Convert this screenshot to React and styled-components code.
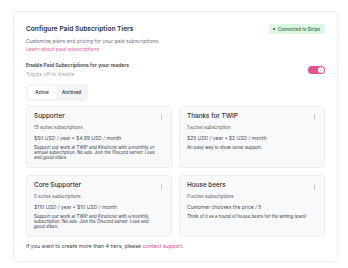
import React from 'react';
import styled, { createGlobalStyle } from 'styled-components';

const GlobalStyle = createGlobalStyle`
  body {
    margin: 0;
    background: #ffffff;
    font-family: Inter, "Liberation Sans", sans-serif;
  }
`;

const Panel = styled.section`
  margin: 11px 10px 0 13px;
  padding: 12px 12px 13px 12px;
  border: 1px solid #eceef1;
  border-radius: 4px;
  background: #fff;
  box-sizing: border-box;
  height: 251px;
`;

const Header = styled.div`
  display: flex;
  justify-content: space-between;
  align-items: center;
  height: 10px;
`;

const Title = styled.h2`
  margin: 0;
  font-size: 6.6px;
  font-weight: 600;
  color: #2b2f36;
`;

const Badge = styled.span`
  display: flex;
  align-items: center;
  gap: 3px;
  height: 10px;
  padding: 0 5px 0 4px;
  border-radius: 2px;
  background: #dcf7e3;
  color: #2f6b43;
  font-size: 4.4px;
  font-weight: 500;
`;

const Dot = styled.span`
  width: 2px;
  height: 2px;
  border-radius: 1px;
  background: #29493a;
`;

const Description = styled.p`
  margin: 3px 0 0;
  font-size: 5px;
  line-height: 8px;
  color: #6b7280;
`;

const Link = styled.a`
  color: ${({ $strong }) => ($strong ? '#e0468f' : '#e85a9c')};
  text-decoration: none;
  display: ${({ $block }) => ($block ? 'block' : 'inline')};
`;

const ToggleRow = styled.div`
  display: flex;
  justify-content: space-between;
  align-items: center;
  margin-top: 8px;
`;

const Label = styled.div`
  font-size: 5px;
  line-height: 8px;
  font-weight: 600;
  color: #3a3f47;
`;

const Hint = styled.div`
  margin-top: 1px;
  font-size: 5px;
  line-height: 8px;
  color: #a3a8b0;
`;

const Switch = styled.span`
  display: flex;
  align-items: center;
  justify-content: flex-end;
  width: 17px;
  height: 8px;
  padding: 0 1px;
  box-sizing: border-box;
  border-radius: 4px;
  background: #e4518f;
`;

const Knob = styled.span`
  display: flex;
  align-items: center;
  justify-content: center;
  width: 6px;
  height: 6px;
  border-radius: 50%;
  background: #fff;
`;

const Tabs = styled.div`
  display: inline-flex;
  margin-top: 6px;
  padding: 2px;
  border-radius: 3px;
  background: #f3f4f6;
  gap: 1px;
`;

const Tab = styled.button`
  border: 0;
  height: 13px;
  padding: 0 ${({ $active }) => ($active ? '6px' : '5px')};
  min-width: ${({ $active }) => ($active ? '28px' : '0')};
  border-radius: 2px;
  background: ${({ $active }) => ($active ? '#ffffff' : 'transparent')};
  font-family: inherit;
  font-size: 4.4px;
  font-weight: 600;
  color: #3a3f47;
`;

const Grid = styled.div`
  display: grid;
  grid-template-columns: 1fr 1fr;
  gap: 7px;
  margin-top: 5px;
`;

const Card = styled.div`
  position: relative;
  height: 62px;
  padding: 5px 6px 0 7px;
  border: 1px solid #eceef1;
  border-radius: 3px;
  background: #f8f9fb;
  box-sizing: border-box;
`;

const CardTitle = styled.h3`
  margin: 0;
  font-size: 6.4px;
  line-height: 9px;
  font-weight: 500;
  color: #2b2f36;
`;

const Menu = styled.span`
  position: absolute;
  top: 8px;
  right: 9px;
  display: flex;
  flex-direction: column;
  gap: 0.8px;
`;

const MenuDot = styled.span`
  width: 1px;
  height: 1px;
  border-radius: 50%;
  background: #9aa0a8;
`;

const Count = styled.div`
  margin-top: 4px;
  font-size: 4.5px;
  line-height: 6px;
  color: #4b5059;
`;

const Price = styled.div`
  margin-top: 4px;
  font-size: 5px;
  line-height: 7px;
  color: #4b5059;
`;

const Blurb = styled.p`
  margin: 2.5px 0 0;
  padding-right: 6px;
  font-size: 4.4px;
  line-height: 5px;
  color: #2f343b;
`;

const Footer = styled.p`
  margin: 5px 0 0;
  font-size: 5.3px;
  line-height: 8px;
  color: #3a3f47;
`;

const tiers = [
  {
    name: 'Supporter',
    count: '13 active subscriptions',
    price: '$50 USD / year \u2022 $4.99 USD / month',
    text: 'Support our work at TWIP and Kineticist with a monthly or annual subscription. No ads. Join the Discord server. Love and good vibes.',
  },
  {
    name: 'Thanks for TWIP',
    count: '1 active subscription',
    price: '$25 USD / year \u2022 $2 USD / month',
    text: 'An easy way to show some support.',
  },
  {
    name: 'Core Supporter',
    count: '0 active subscriptions',
    price: '$110 USD / year \u2022 $10 USD / month',
    text: 'Support our work at TWIP and Kineticist with a monthly subscription. No ads. Join the Discord server. Love and good vibes.',
  },
  {
    name: 'House beers',
    count: '0 active subscriptions',
    price: 'Customer chooses the price / 5',
    text: 'Think of it as a round of house beers for the writing team!',
  },
];

function App() {
  return (
    <>
      <GlobalStyle />
      <Panel>
        <Header>
          <Title>Configure Paid Subscription Tiers</Title>
          <Badge>
            <Dot />
            Connected to Stripe
          </Badge>
        </Header>
        <Description>
          Customize plans and pricing for your paid subscriptions.
          <Link $block href="#">Learn about paid subscriptions</Link>
        </Description>
        <ToggleRow>
          <div>
            <Label>Enable Paid Subscriptions for your readers</Label>
            <Hint>Toggle off to disable</Hint>
          </div>
          <Switch>
            <Knob>
              <svg width="4" height="4" viewBox="0 0 8 8">
                <path d="M2 4.2 L3.4 5.6 L6 2.6" fill="none" stroke="#e4518f" strokeWidth="1" />
              </svg>
            </Knob>
          </Switch>
        </ToggleRow>
        <Tabs>
          <Tab $active>Active</Tab>
          <Tab>Archived</Tab>
        </Tabs>
        <Grid>
          {tiers.map((tier) => (
            <Card key={tier.name}>
              <CardTitle>{tier.name}</CardTitle>
              <Menu>
                <MenuDot />
                <MenuDot />
                <MenuDot />
              </Menu>
              <Count>{tier.count}</Count>
              <Price>{tier.price}</Price>
              <Blurb>{tier.text}</Blurb>
            </Card>
          ))}
        </Grid>
        <Footer>
          If you want to create more than 4 tiers, please <Link $strong href="#">contact support.</Link>
        </Footer>
      </Panel>
    </>
  );
}

export default App;
